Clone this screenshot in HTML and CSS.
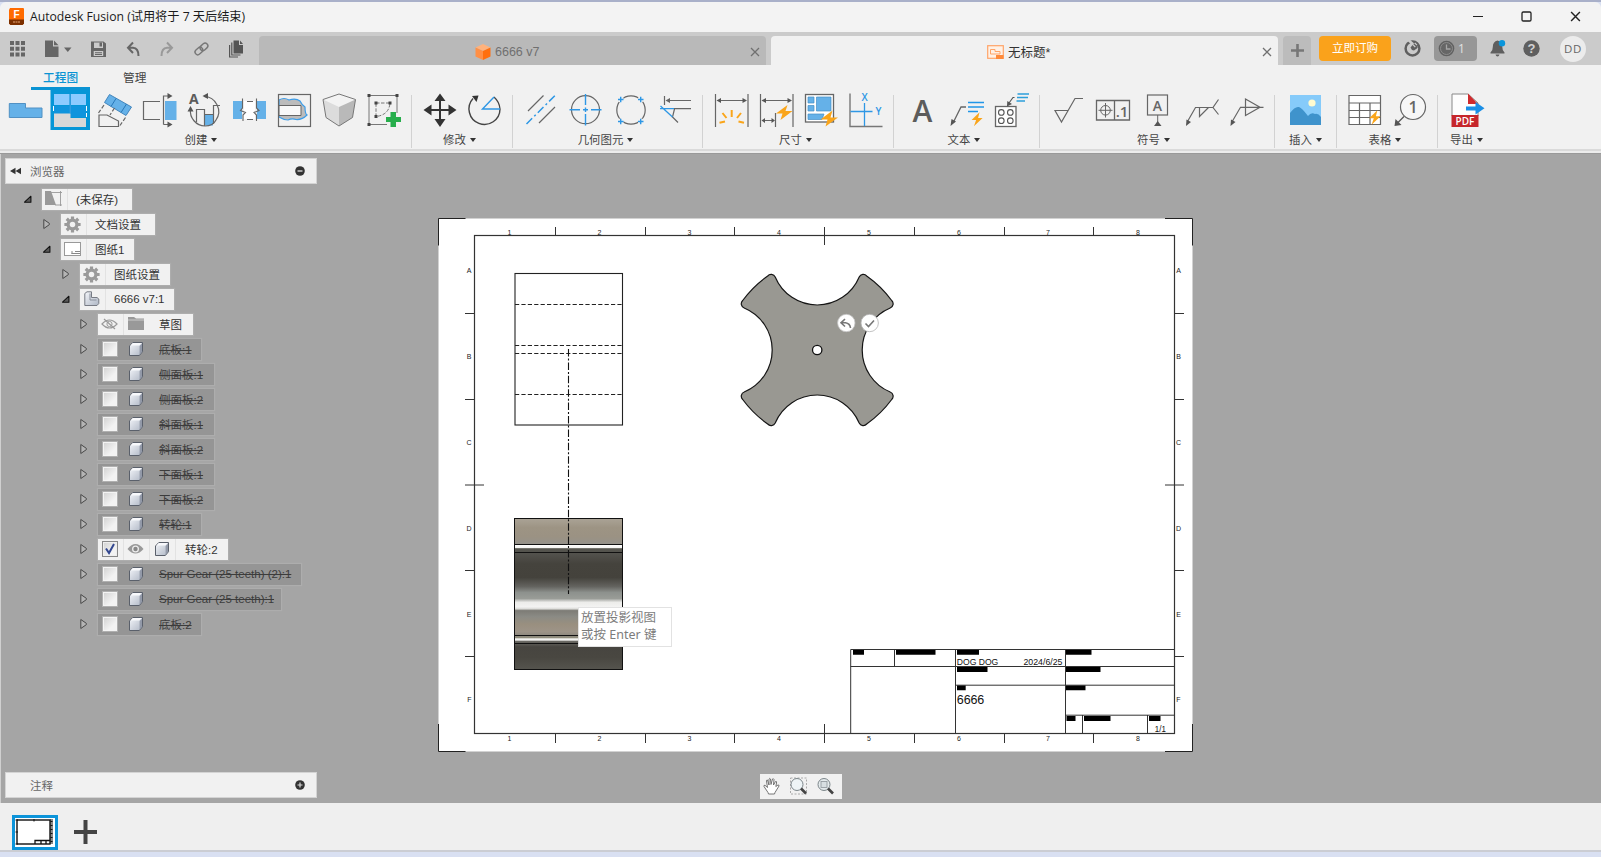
FILE: index.html
```html
<!DOCTYPE html>
<html lang="zh-CN">
<head>
<meta charset="utf-8">
<title>Autodesk Fusion</title>
<link rel="stylesheet" href="styles.css">
</head>
<body>
<svg class="defs" width="0" height="0">
  <defs>
    <linearGradient id="boxg" x1="0" y1="0" x2="1" y2="1"><stop offset="0" stop-color="#f4f6fa"/><stop offset="1" stop-color="#aeb6c4"/></linearGradient>
    <linearGradient id="shaft" x1="0" y1="0" x2="0" y2="1">
      <stop offset="0" stop-color="#aaa396"/><stop offset=".06" stop-color="#9d9484"/><stop offset=".12" stop-color="#9b9283"/><stop offset=".168" stop-color="#95928b"/>
      <stop offset=".175" stop-color="#fff"/><stop offset=".193" stop-color="#f4f4f2"/><stop offset=".2" stop-color="#55554e"/><stop offset=".235" stop-color="#52514c"/>
      <stop offset=".3" stop-color="#45433d"/><stop offset=".39" stop-color="#44423c"/><stop offset=".45" stop-color="#63635f"/><stop offset=".49" stop-color="#8d918d"/>
      <stop offset=".53" stop-color="#999c97"/><stop offset=".555" stop-color="#ececea"/><stop offset=".585" stop-color="#f3f3f2"/><stop offset=".598" stop-color="#dcdcd9"/>
      <stop offset=".61" stop-color="#7d7c76"/><stop offset=".65" stop-color="#8b8b85"/><stop offset=".7" stop-color="#998f7f"/><stop offset=".75" stop-color="#9d9488"/><stop offset=".775" stop-color="#8d897f"/>
      <stop offset=".79" stop-color="#8f8d7c"/><stop offset=".797" stop-color="#f8f8f6"/><stop offset=".806" stop-color="#f0f0ee"/><stop offset=".812" stop-color="#6c6b65"/><stop offset=".85" stop-color="#474540"/><stop offset=".92" stop-color="#494741"/><stop offset="1" stop-color="#55544e"/>
    </linearGradient>
    <symbol id="body" viewBox="0 0 16 16"><path d="M1.500 5 4.800 1.500H14.500V10.700L11.300 14.500H1.500Z" fill="url(#boxg)" stroke="#5a606b" stroke-width="1" stroke-linejoin="round"/><path d="M2.300 4.600 5 2.100H13.900L11.300 4.600Z" fill="#f8f9fc"/><path d="M11.600 4.900V13.500L14 10.700V2.600Z" fill="#9299a8"/></symbol>
    <symbol id="gear" viewBox="0 0 18 18"><g fill="#9a9a9a"><circle cx="9" cy="9" r="6.400"/><path d="M7.300.4H10.700V3.200H7.300ZM7.300 14.800H10.700V17.600H7.300ZM.4 7.300H3.200V10.700H.4ZM14.800 7.300H17.600V10.700H14.800Z"/><path transform="rotate(45 9 9)" d="M7.300.4H10.700V3.200H7.300ZM7.300 14.800H10.700V17.600H7.300ZM.4 7.300H3.200V10.700H.4ZM14.800 7.300H17.600V10.700H14.800Z"/></g><circle cx="9" cy="9" r="2.900" fill="#f1f1f1"/></symbol>
    <symbol id="shut" viewBox="0 0 9 12"><path d="M1.800 1.500V10.500L7.300 6.700V5.300Z" fill="#b4b4b4" stroke="#484848" stroke-width="1" stroke-linejoin="round"/></symbol>
    <symbol id="open" viewBox="0 0 9 12"><path d="M1.500 9.200H7.900V3.200Z" fill="#5a5a5a" stroke="#111" stroke-width="1.100" stroke-linejoin="round"/></symbol>
    <symbol id="x" viewBox="0 0 10 10"><path d="M1 1 9 9M9 1 1 9" stroke="currentColor" stroke-width="1.300" fill="none"/></symbol>
    <symbol id="bolt" viewBox="0 0 14 16"><path d="M9.800.3 1 8.700H6L3.600 15.700 13.200 6.600H8.200Z" fill="#faa51a"/></symbol>
  </defs>
</svg>

<div class="desk"></div>
<header class="titlebar">
  <svg class="logo" width="15" height="17" viewBox="0 0 15 17"><path d="M1 0H14Q15 0 15 1V15.500L13.500 17H1.500L0 15.500V2Z" fill="#ff6b00"/><path d="M0 11.500H15V15.500L13.500 17H1.500L0 15.500Z" fill="#7c3000"/><text x="7.500" y="10" class="logo-f">F</text><path d="M4 14H11" stroke="#e8a878" stroke-dasharray="2 .5"/></svg>
  <span class="title">Autodesk Fusion (试用将于 7 天后结束)</span>
  <div class="winbtns">
    <svg width="10" height="12"><path d="M0 6.500H10" stroke="#222"/></svg>
    <svg width="11" height="11"><rect x="1" y="1" width="9" height="9" rx="1.300" fill="none" stroke="#222" stroke-width="1.300"/></svg>
    <svg width="11" height="11"><use href="#x" color="#222"/></svg>
  </div>
</header>

<nav class="tabrow">
  <div class="quick">
    <svg width="259" height="33" viewBox="0 32 259 33">
      <g fill="#666"><path d="M10 41h4v4h-4zM15.500 41h4v4h-4zM21 41h4v4h-4zM10 46.700h4v4h-4zM15.500 46.700h4v4h-4zM21 46.700h4v4h-4zM10 52.400h4v4h-4zM15.500 52.400h4v4h-4zM21 52.400h4v4h-4z"/>
      <path d="M45 40.500H53V46.500H58.500V57H45ZM54 40.500 58.500 45.300H54Z"/><path d="M64 47.500H71.500L67.800 52Z"/>
      <path fill-rule="evenodd" d="M91 41.500H103.500L106 43.500V57H91ZM94 42.500V48H103V42.500ZM93.700 51V56H103.200V51Z"/><path d="M99.500 42.500H102V46.500H99.500ZM95 52.200H102V53.200H95ZM95 54H102V55H95Z"/></g>
      <g fill="none" stroke="#666" stroke-width="2"><path d="M133 42.500 128 47.700 133 53M128.500 47.700H133Q138.500 48 138.500 56"/><path d="M167 42.500 172 47.700 167 53M171.500 47.700H167Q161.500 48 161.500 56" stroke="#999"/></g>
      <g fill="none" stroke="#777" stroke-width="1.400" transform="rotate(-42 201.500 49)"><rect x="194" y="46" width="8.500" height="5.500" rx="2.700"/><rect x="200.500" y="46.300" width="8.500" height="5.500" rx="2.700"/></g>
      <path d="M233.500 40.500H239V45H243V53.500H233.500ZM240 40.500 243 44H240Z" fill="#555"/><path d="M231.800 42.500V55H240.500M229.600 45V57H238" fill="none" stroke="#555" stroke-width="1.200"/>
    </svg>
  </div>
  <div class="tab">
    <svg class="cube" width="16" height="16" viewBox="0 0 16 16"><path d="M8 0 15.500 3.500 8 7 .5 3.500Z" fill="#ffb27c"/><path d="M.5 3.500 8 7V16L.5 12.500Z" fill="#ff8f45"/><path d="M15.500 3.500 8 7V16L15.500 12.500Z" fill="#ff6f0e"/></svg>
    <span>6666 v7</span><svg class="close" width="10" height="10"><use href="#x"/></svg>
  </div>
  <div class="tab active">
    <svg class="cube" width="17" height="14" viewBox="0 0 17 14"><rect x=".7" y=".7" width="15.600" height="12.600" fill="#fff1e6" stroke="#ffa468" stroke-width="1.200"/><path d="M3.500 4.500H8V6.500H13V9H3.500Z" fill="none" stroke="#ffa468"/><path d="M9 10H16.500V14H9Z" fill="#ff8a3a"/></svg>
    <span>无标题*</span><svg class="close" width="10" height="10"><use href="#x"/></svg>
  </div>
  <div class="newtab"><svg width="13" height="13"><path d="M6.500 0V13M0 6.500H13" stroke="#777" stroke-width="2.600"/></svg></div>
  <div class="buy">立即订购</div>
  <svg class="ext" width="17" height="17" viewBox="0 0 17 17"><circle cx="8.500" cy="8.500" r="6.900" fill="none" stroke="#5f5f5f" stroke-width="2.500"/><path d="M4.800.4 9.500 4.800" stroke="#ccc" stroke-width="2.600"/><path d="M6.500 7.500 9.800 3.500 14 2.500 13.500 8 10 10.500 8 10Z" fill="#5f5f5f"/><path d="M8.300 4 11.300 7M10.800 3 13 5.200" stroke="#ccc" stroke-width="1.100"/></svg>
  <div class="jobs"><svg width="17" height="17"><circle cx="8.500" cy="8.500" r="7.800" fill="#606060"/><circle cx="8.500" cy="8.500" r="6" fill="#666" stroke="#8c8c8c" stroke-width="1"/><path d="M8.500 4.500V9H12.500" fill="none" stroke="#a5a5a5" stroke-width="1.300"/></svg><span>1</span></div>
  <svg class="bell" width="17" height="18" viewBox="0 0 17 18"><path d="M7.500 1.500Q2.800 2.500 2.800 8 2.800 12 .5 13.500V14.500H14.500V13.500Q12.300 12 12.300 8 12 2.500 7.500 1.500ZM5.500 15.500H9.500Q9 17.500 7.500 17.500 6 17.500 5.500 15.500Z" fill="#5f5f5f"/><circle cx="12" cy="4.200" r="3.200" fill="#0a96dc"/></svg>
  <svg class="help" width="17" height="17"><circle cx="8.500" cy="8.500" r="8.200" fill="#5f5f5f"/><text x="8.500" y="13.200" class="q">?</text></svg>
  <div class="avatar">DD</div>
</nav>

<section class="ribbon">
  <div class="rtabs"><span class="on">工程图</span><span class="mgr">管理</span></div>
  <div class="groups">
    <div class="group g1"><div class="icons">
      <svg viewBox="3 90 45 40"><path d="M9.300 103.500H25.500V108H42V117.500H9.300Z" fill="#65b1e8" stroke="#5191c4"/></svg>
      <svg viewBox="48 90 45 40"><rect x="50.500" y="90" width="39.500" height="40" fill="#0696d7"/><path d="M54 94H69.500V105H54ZM71 94H86V105H71Z" fill="#8ccbff"/><path d="M54 106H86V117H54Z" fill="#0f94dd"/><path d="M54 113.500H70.500V118H86V127H54Z" fill="#d8d8d8"/><path d="M53.500 106V113M86.500 106V117" stroke="#fff" stroke-dasharray="5 2"/><path d="M70.200 94V113" stroke="#3f9fe0"/></svg>
      <svg viewBox="93 90 45 40"><path d="M109.500 94.500 131.500 107 126 115.500 104.500 102.500Z" fill="#65b1e8" stroke="#4386bd"/><path d="M116 98.500 111 106.500M126.500 104 121 112.500" stroke="#2878b8"/><path d="M99 115H107L118.500 121V126.500H99Z" fill="none" stroke="#666" stroke-width="1.200"/><path d="M104 105 98.500 113M125.500 117.500 120 125.500M114.500 108 110 115" stroke="#666" stroke-width="1.200" stroke-dasharray="4 2"/></svg>
      <svg viewBox="138 90 45 40"><rect x="165" y="101" width="11.500" height="19" fill="#65b1e8"/><g fill="none" stroke="#666" stroke-width="1.200"><path d="M160 101.500H143.500V119.500H160M163.500 124.500V96H169M163.500 124.500H169"/></g><path d="M167.500 93 172.500 96 167.500 99ZM167.500 121.500 172.500 124.500 167.500 127.500Z" fill="#555"/></svg>
      <svg viewBox="183 90 45 40"><path d="M205 114.500H213V125.500H205Z" fill="#65b1e8"/><g fill="none" stroke="#666" stroke-width="1.200"><path d="M204 96.500A15 15 0 0 1 216 120Q213 126 205 126A15 15 0 0 1 190.500 109"/><path d="M196.500 122V109.500H204.500V126M204.500 114.500H213.500V124M213.500 114V105.500H220"/></g><path d="M202.500 96 208 93V99ZM190.500 106 187.500 111.500H193.500Z" fill="#555"/><text x="189" y="103.500" class="ico-a small">A</text></svg>
      <svg viewBox="228 90 45 40"><path d="M233 101H242V119H233ZM257 101H266V119H257Z" fill="#65b1e8"/><path d="M244 101H255V119H244Z" fill="#fff"/><g fill="none" stroke="#666" stroke-width="1.100"><path d="M242.500 98.500V108L240.500 110.500 245.500 112.500 243 115V121M256.500 98.500V108L259 110.500 254 112.500 256.500 115V121M247 101.500H253M247 119.500H253"/></g></svg>
      <svg viewBox="273 90 45 40"><path d="M279 100Q284 97 289 100 296 98 300 101 302 105 305 107 305 114 307 115 302 120 296 119.500 292 118 288 120 284 120 279 117Z" fill="#bcbcbc" stroke="#3d9de8" stroke-width="1.200"/><path d="M279 105.500H301V115.500H279Z" fill="#f8f8f8" stroke="#666"/><rect x="278.500" y="94.500" width="32" height="32" fill="none" stroke="#666" stroke-width="1.200"/></svg>
      <svg viewBox="318 90 45 40"><path d="M339 94 355.500 99.500 339 107 323 99.500Z" fill="#f3f3f3"/><path d="M323 99.500 339 107V126L326 117.500Z" fill="#dcdcdc"/><path d="M355.500 99.500 339 107V126L352.500 117.500Z" fill="#b9b9b9"/><path d="M339 94 355.500 99.500 352.500 117.500 339 126 326 117.500 323 99.500Z" fill="none" stroke="#777"/></svg>
      <svg viewBox="363 90 45 40"><path d="M369 95.500H397V113M369 95.500V124.500H387" fill="none" stroke="#777"/><path d="M376 103H390Q389 115 376 116.500Z" fill="none" stroke="#777" stroke-dasharray="3.500 1.500"/><path d="M367.500 94h3v3h-3zM395.500 94h3v3h-3zM367.500 123h3v3h-3zM374.500 101.500h3v3h-3zM388.500 101.500h3v3h-3zM374.500 115h3v3h-3z" fill="#444"/><path d="M390.500 112H396V117H401V122H396V127H390.500V122H386V117H390.500Z" fill="#27ae4c"/></svg>
    </div><div class="glabel">创建<i></i></div></div>
    <div class="group g2"><div class="icons">
      <svg viewBox="418 90 45 40"><path d="M440 98V122M428 110H452" stroke="#333" stroke-width="2"/><path d="M440 93.500 445.500 101H434.500ZM440 127 445.500 119H434.500ZM423.500 110 431.500 104.500V115.500ZM456.500 110 448.500 104.500V115.500Z" fill="#333"/></svg>
      <svg viewBox="463 90 45 40"><path d="M473 98.500A15.500 15.500 0 1 0 500 109" fill="none" stroke="#444" stroke-width="1.400"/><path d="M494 97Q499.500 102 500 109" fill="none" stroke="#444" stroke-width="1.300"/><path d="M494 97 482.500 109H500" fill="none" stroke="#2e97e5" stroke-width="1.400"/><path d="M472 96 478.500 95.500 476.500 102Z" fill="#333"/></svg>
    </div><div class="glabel">修改<i></i></div></div>
    <div class="group g3"><div class="icons">
      <svg viewBox="519 90 45 40"><path d="M528 111 543.500 95.500M539 123 555 107" stroke="#666" stroke-width="1.200"/><path d="M526.500 124 555 95.500" stroke="#2e97e5" stroke-width="1.500" stroke-dasharray="8 3 2 3"/></svg>
      <svg viewBox="564 90 45 40"><circle cx="585.500" cy="109.700" r="14" fill="none" stroke="#666" stroke-width="1.200"/><path d="M585.500 94V105M585.500 107.500V112M585.500 114V125.500M569.500 109.700H580M583 109.700H588M591 109.700H601.500" stroke="#2e97e5" stroke-width="1.400"/></svg>
      <svg viewBox="609 90 45 40"><circle cx="631" cy="110" r="14.200" fill="none" stroke="#666" stroke-width="1.200"/><path d="M618 99.500H623.500M620.700 96.700V102.300M638 99.500H643.500M640.700 96.700V102.300M618 121.500H623.500M620.700 118.700V124.300M638 121.500H643.500M640.700 118.700V124.300" stroke="#f1f1f1" stroke-width="4"/><path d="M618 99.500H623.500M620.700 96.700V102.300M638 99.500H643.500M640.700 96.700V102.300M618 121.500H623.500M620.700 118.700V124.300M638 121.500H643.500M640.700 118.700V124.300" stroke="#2e97e5" stroke-width="1.400"/></svg>
      <svg viewBox="654 90 45 40"><path d="M664.500 96V105M667 100.500H691M674 108.700H691M674.500 109 672.500 117 678 122.500" fill="none" stroke="#666" stroke-width="1.200"/><path d="M665.500 100.500 670 98V103Z" fill="#666"/><path d="M660 108.700H674M660.500 106 672.500 117" stroke="#2e97e5" stroke-width="1.300" fill="none"/></svg>
    </div><div class="glabel">几何图元<i></i></div></div>
    <div class="group g4"><div class="icons">
      <svg viewBox="709 90 45 40"><path d="M715.500 94V127M748 94V127M719 100.500H745" stroke="#666" stroke-width="1.200"/><path d="M716.500 100.500 721 98V103ZM747 100.500 742.500 98V103Z" fill="#555"/><path d="M731.700 110V117M722.500 113 726.500 118M741 113 737 118M719.500 122.700 725 121.500M744 122.700 738.500 121.500" stroke="#faa51a" stroke-width="2"/></svg>
      <svg viewBox="754 90 45 40"><path d="M760.500 94V127M793 94V127M764 100.500H790M775.500 113V127M763 120.500H773" stroke="#666" stroke-width="1.200"/><path d="M761.500 100.500 766 98V103ZM792 100.500 787.500 98V103ZM761.500 120.500 765 118V123ZM775 120.500 771.500 118V123Z" fill="#555"/><path d="M787.500 105 776 113.500H782.500L780.500 120 792.500 111H785.500Z" fill="#faa51a"/></svg>
      <svg viewBox="799 90 45 40"><rect x="805.500" y="94.500" width="28" height="27.500" fill="#fff" stroke="#666" stroke-width="1.300"/><path d="M808 97H814V103H808ZM808 105.500H814V111H808ZM816.500 97H831V111H816.500ZM808 114H824L822 119.500H808Z" fill="#65b1e8" stroke="#468fc6" stroke-width=".7"/><path d="M832.500 110.500 820.500 119.500H827.500L825.500 126.500 838 117.500H830.500Z" fill="#faa51a"/></svg>
      <svg viewBox="844 90 45 40"><path d="M850 93.500V126.500H882.500" fill="none" stroke="#777" stroke-width="1.400"/><path d="M864.500 103V126M850.500 111.500H872.500" stroke="#2e97e5" stroke-width="1.300"/><text x="864.500" y="101" class="xy">X</text><text x="878.500" y="115" class="xy">Y</text></svg>
    </div><div class="glabel">尺寸<i></i></div></div>
    <div class="group g5"><div class="icons">
      <svg viewBox="900 90 45 40"><text x="922.500" y="122" class="ico-a mid">A</text></svg>
      <svg viewBox="945 90 45 40"><path d="M966 107H961L953.500 122" fill="none" stroke="#666" stroke-width="1.300"/><path d="M950.500 126 951.500 119 956 121.500Z" fill="#555"/><path d="M968 102.500H984M968 107H984M968 111.500H978" stroke="#2196e8" stroke-width="1.700"/><use href="#bolt" x="970" y="112" width="14" height="14.500"/></svg>
      <svg viewBox="990 90 45 40"><rect x="995.500" y="106.500" width="20.500" height="20" fill="#fff" stroke="#666" stroke-width="1.300"/><g fill="none" stroke="#555" stroke-width="1.100"><circle cx="1001.300" cy="112.400" r="2.800"/><circle cx="1010.300" cy="112.400" r="2.800"/><circle cx="1001.300" cy="120.700" r="2.800"/><circle cx="1010.300" cy="120.700" r="2.800"/><path d="M1014.500 97.500H1013L1009 103"/></g><path d="M1007 106.500 1007.300 101 1012 104Z" fill="#555"/><path d="M1017.500 94H1029M1017 97.500H1028M1016.500 101H1025" stroke="#2d9fda" stroke-width="1.400"/></svg>
    </div><div class="glabel">文本<i></i></div></div>
    <div class="group g6"><div class="icons">
      <svg viewBox="1045 90 45 40"><path d="M1083 98.500H1075L1061.500 122 1055 110.500H1068" fill="none" stroke="#666" stroke-width="1.200"/></svg>
      <svg viewBox="1090 90 45 40"><path d="M1096.500 100.500H1129.500V120H1096.500ZM1114.500 100.500V120" fill="none" stroke="#666" stroke-width="1.300"/><path d="M1105.500 103V117.500M1098.500 110.300H1112.500" stroke="#666"/><circle cx="1105.500" cy="110.300" r="4.800" fill="none" stroke="#666"/><text x="1122" y="116.500" class="sym tol">.1</text></svg>
      <svg viewBox="1135 90 45 40"><rect x="1147.500" y="95" width="20" height="20" fill="none" stroke="#666" stroke-width="1.200"/><text x="1157.500" y="111" class="sym">A</text><path d="M1157.700 115V123" stroke="#666"/><path d="M1157.700 121 1161.500 126H1154Z" fill="#555"/></svg>
      <svg viewBox="1180 90 45 40"><path d="M1187.500 121.500 1195.500 107.500H1213M1199.500 107.500V116.500L1208.500 107.500M1218.500 99.500 1213 107.500 1218.500 114.500" fill="none" stroke="#666" stroke-width="1.200"/><path d="M1186 126 1186.500 119.500 1191 122Z" fill="#555"/></svg>
      <svg viewBox="1225 90 45 40"><path d="M1232.500 121 1240.500 107.300H1263.500M1245.500 99V115.500L1260 107.300Z" fill="none" stroke="#666" stroke-width="1.200"/><path d="M1230.500 126 1231 119.500 1235.500 122Z" fill="#555"/></svg>
    </div><div class="glabel">符号<i></i></div></div>
    <div class="group g7"><div class="icons">
      <svg viewBox="1283 90 45 40"><rect x="1290" y="95" width="31" height="30" fill="#86cbfa"/><path d="M1290 113Q1295 106 1299 107 1302 108 1308 116 1311 112 1315 114 1318 113 1321 117V125H1290Z" fill="#3f93cc"/><circle cx="1312" cy="103" r="3.600" fill="#fffbd0"/></svg>
    </div><div class="glabel">插入<i></i></div></div>
    <div class="group g8"><div class="icons">
      <svg viewBox="1342 90 45 40"><path d="M1349 95.500H1380.500V124.500H1349ZM1349 103H1380.500M1349 110.500H1380.500M1349 117.500H1380.500M1359.500 103V124.500M1370 103V124.500" fill="#fff" stroke="#666" stroke-width="1.200"/><use href="#bolt" x="1368" y="110" width="13.500" height="15"/></svg>
      <svg viewBox="1387 90 45 40"><circle cx="1413" cy="107" r="12.500" fill="#f7f7f7" stroke="#666" stroke-width="1.200"/><text x="1413" y="112.500" class="sym one">1</text><path d="M1404 116.500 1398 122.500" stroke="#555" stroke-width="1.300"/><path d="M1394.500 126 1395.500 119 1401.500 125Z" fill="#555"/></svg>
    </div><div class="glabel">表格<i></i></div></div>
    <div class="group g9"><div class="icons">
      <svg viewBox="1444 90 45 40"><path d="M1452 94H1468L1478 103V116H1452Z" fill="#fdfdfd" stroke="#888"/><path d="M1468 93.500V104H1478Z" fill="#cf2a2d"/><path d="M1451.500 115H1478.500V127H1451.500Z" fill="#c6262b"/><text x="1465" y="124.800" class="pdf">PDF</text><path d="M1466 106.500H1475.500V102L1484.500 108.300 1475.500 114.500V110.500H1466Z" fill="#1a8fe6"/></svg>
    </div><div class="glabel">导出<i></i></div></div>
  </div>
</section>

<main class="canvas">
  <svg class="sheet" width="756" height="536" viewBox="438 217 756 536">
    <rect x="438.500" y="218.500" width="754" height="533" fill="#fff"/>
    <path d="M465.500 218.500H438.500V245.500M1165 218.500H1192.500V245.500M438.500 724V751.500H465.500M1192.500 724V751.500H1165" fill="none" stroke="#222"/>
    <rect x="474.500" y="235.500" width="700" height="498" fill="none" stroke="#333" stroke-width="1.200"/>
    <path stroke="#333" fill="none" d="M555.500 227V235M645.500 227V235M734.500 227V235M824.500 227V245M914.500 227V235M1004.500 227V235M1093.500 227V235M555.500 734V743M645.500 734V743M734.500 734V743M824.500 724V743M914.500 734V743M1004.500 734V743M1093.500 734V743M465 313.500H474M465 399.500H474M465 485H484M465 570.500H474M465 656.500H474M1175 313.500H1184M1175 399.500H1184M1165 485H1184M1175 570.500H1184M1175 656.500H1184"/>
    <g class="zone">
      <text x="509.500" y="235">1</text><text x="599.500" y="235">2</text><text x="689.500" y="235">3</text><text x="779" y="235">4</text><text x="869" y="235">5</text><text x="959" y="235">6</text><text x="1048" y="235">7</text><text x="1138" y="235">8</text>
      <text x="509.500" y="740.700">1</text><text x="599.500" y="740.700">2</text><text x="689.500" y="740.700">3</text><text x="779" y="740.700">4</text><text x="869" y="740.700">5</text><text x="959" y="740.700">6</text><text x="1048" y="740.700">7</text><text x="1138" y="740.700">8</text>
      <text x="469" y="273">A</text><text x="469" y="359">B</text><text x="469" y="445">C</text><text x="469" y="530.700">D</text><text x="469" y="616.500">E</text><text x="469.500" y="702.300">F</text>
      <text x="1178.500" y="273">A</text><text x="1178.500" y="359">B</text><text x="1178.500" y="445">C</text><text x="1178.500" y="530.700">D</text><text x="1178.500" y="616.500">E</text><text x="1178.500" y="702.300">F</text>
    </g>
    <rect x="515" y="273.500" width="107.500" height="151.500" fill="none" stroke="#222" stroke-width="1.100"/>
    <path d="M515 304.500H622M515 345.500H622M515 353.500H622M515 394.500H622" stroke="#222" stroke-dasharray="4.200 2.200" stroke-width="1.100"/>
    <rect x="514.500" y="518.500" width="108" height="151" fill="url(#shaft)" stroke="#111"/>
    <path d="M514 544.500H622M514 552.500H622M514 635.500H622M514 643.500H622" stroke="#111"/>
    <path d="M568.500 349V594" stroke="#111" stroke-dasharray="7.500 2 2 1.900" stroke-width="1.100"/>
    <path transform="translate(817.200 350)" fill="#999892" stroke="#151515" stroke-width="1.200" d="M-42-73A45.500 45.500 0 0 0 42-73A4.500 4.500 0 0 1 49.500-74A110 110 0 0 1 74.500-49.500A4.500 4.500 0 0 1 73-42A45.500 45.500 0 0 0 73 42A4.500 4.500 0 0 1 74.500 49.500A110 110 0 0 1 49.500 74A4.500 4.500 0 0 1 42 73A45.500 45.500 0 0 0-42 73A4.500 4.500 0 0 1-49.500 74A110 110 0 0 1-74.500 49.500A4.500 4.500 0 0 1-73 42A45.500 45.500 0 0 0-73-42A4.500 4.500 0 0 1-74.500-49.500A110 110 0 0 1-49.500-74A4.500 4.500 0 0 1-42-73Z"/>
    <circle cx="817.200" cy="350" r="4.700" fill="#fff" stroke="#111" stroke-width="1.300"/>
    <g><circle cx="846.300" cy="323" r="8.700" fill="#fff" stroke="#c4c4c4" stroke-width=".8"/><circle cx="869.700" cy="323" r="8.700" fill="#fff" stroke="#b4b4b4" stroke-width=".8"/><path d="M845 319 841 322.800 845 326.500M841.500 322.800H845.500Q850 323.500 850.500 328M865.500 323.500 868.500 326.500 874 320.500" fill="none" stroke="#777" stroke-width="1.600"/></g>
    <path d="M850.700 733V649.500H1174M894.500 649.500V666.500M955.500 649.500V733M1065.500 649.500V733M1082.500 715V733M1147.500 715V733M850.700 666.500H1174M955.500 685.200H1174M1065.500 715.200H1174" fill="none" stroke="#333"/>
    <path d="M853 650h11v4.700h-11zM896 650h39.500v4.700h-39.500zM957 650h22v4.700h-22zM1066 650h25.500v4.700h-25.500zM957 667h30.500v5h-30.500zM1066 667h34.500v5h-34.500zM957 685.500h8.700v4.800h-8.700zM1066 685.500h19.500v4.800h-19.500zM1066.500 716h9v5h-9zM1084 716h26.500v5h-26.500zM1149 716h11.500v5h-11.500z"/>
    <g class="block"><text x="956.800" y="664.500" textLength="41.500" lengthAdjust="spacingAndGlyphs">DOG DOG</text><text x="1023.500" y="664.500" textLength="39" lengthAdjust="spacingAndGlyphs">2024/6/25</text><text x="956.800" y="703.700" textLength="27.500" class="big">6666</text><text x="1154.800" y="731.500" textLength="11" lengthAdjust="spacingAndGlyphs">1/1</text></g>
  </svg>
  <div class="tip">放置投影视图<br>或按 Enter 键</div>

  <aside class="browser">
    <div class="panel"><svg width="12" height="8"><path d="M0 4 5.500 .8V7.200ZM5.500 4 11 .8V7.200Z" fill="#333"/></svg><span>浏览器</span><svg class="dot" width="10" height="10"><circle cx="5" cy="5" r="4.800" fill="#333"/><path d="M2.500 5H7.500" stroke="#ddd" stroke-width="1.300"/></svg></div>
    <ul class="tree">
      <li class="d0"><svg class="arr"><use href="#open"/></svg><div class="node w90"><b><svg width="17" height="16"><path d="M0 0H6L11 14H0Z" fill="#999"/><path d="M5 1.500H17M15.500 0V15M10 14H17" stroke="#999" stroke-width=".9" fill="none"/></svg></b><span>(未保存)</span></div></li>
      <li class="d1"><svg class="arr"><use href="#shut"/></svg><div class="node w94"><b><svg width="17" height="17"><use href="#gear"/></svg></b><span>文档设置</span></div></li>
      <li class="d1"><svg class="arr"><use href="#open"/></svg><div class="node w73"><b><svg width="17" height="14"><rect x=".5" y=".5" width="16" height="13" fill="#fff" stroke="#999"/><path d="M7.500 11.500H16M8 9V12M11 9.500H16" stroke="#888"/></svg></b><span>图纸1</span></div></li>
      <li class="d2"><svg class="arr"><use href="#shut"/></svg><div class="node w90"><b><svg width="17" height="17"><use href="#gear"/></svg></b><span>图纸设置</span></div></li>
      <li class="d2"><svg class="arr"><use href="#open"/></svg><div class="node w94"><b><svg width="16" height="16"><path d="M.8 2.500 3 .8H7.500V6.500H13L14.800 8V12.500L13 14.500H.8Z" fill="url(#boxg)" stroke="#777b84"/><path d="M6 2.500V9H12.500" stroke="#8a909c" fill="none"/></svg></b><span>6666 v7:1</span></div></li>
      <li class="d3"><svg class="arr"><use href="#shut"/></svg><div class="node w95 folder"><b><svg width="17" height="12"><path d="M1 6Q8.500-2 16 6 8.500 14 1 6ZM3 1 14 11" fill="none" stroke="#999" stroke-width="1.200"/><circle cx="8.500" cy="6" r="2.600" fill="none" stroke="#999"/></svg></b><b><svg width="18" height="14"><path d="M1 0H7L9 1.500H17V13H1Z" fill="#999"/><path d="M1 3H17" stroke="#d8d8d8" stroke-width=".8"/></svg></b><span>草图</span></div></li>
      <li class="d3"><svg class="arr"><use href="#shut"/></svg><div class="node off w103"><b><i class="chk"></i></b><b><svg width="16" height="16"><use href="#body"/></svg></b><span>底板:1</span></div></li>
      <li class="d3"><svg class="arr"><use href="#shut"/></svg><div class="node off w116"><b><i class="chk"></i></b><b><svg width="16" height="16"><use href="#body"/></svg></b><span>侧面板:1</span></div></li>
      <li class="d3"><svg class="arr"><use href="#shut"/></svg><div class="node off w116"><b><i class="chk"></i></b><b><svg width="16" height="16"><use href="#body"/></svg></b><span>侧面板:2</span></div></li>
      <li class="d3"><svg class="arr"><use href="#shut"/></svg><div class="node off w116"><b><i class="chk"></i></b><b><svg width="16" height="16"><use href="#body"/></svg></b><span>斜面板:1</span></div></li>
      <li class="d3"><svg class="arr"><use href="#shut"/></svg><div class="node off w116"><b><i class="chk"></i></b><b><svg width="16" height="16"><use href="#body"/></svg></b><span>斜面板:2</span></div></li>
      <li class="d3"><svg class="arr"><use href="#shut"/></svg><div class="node off w116"><b><i class="chk"></i></b><b><svg width="16" height="16"><use href="#body"/></svg></b><span>下面板:1</span></div></li>
      <li class="d3"><svg class="arr"><use href="#shut"/></svg><div class="node off w116"><b><i class="chk"></i></b><b><svg width="16" height="16"><use href="#body"/></svg></b><span>下面板:2</span></div></li>
      <li class="d3"><svg class="arr"><use href="#shut"/></svg><div class="node off w103"><b><i class="chk"></i></b><b><svg width="16" height="16"><use href="#body"/></svg></b><span>转轮:1</span></div></li>
      <li class="d3"><svg class="arr"><use href="#shut"/></svg><div class="node w130"><b><i class="chk on"><svg width="12" height="12"><path d="M2 5.500 5 10 10 1" fill="none" stroke="#33478f" stroke-width="2"/></svg></i></b><b><svg width="17" height="12"><path d="M.5 6Q8.500-4 16.500 6 8.500 15 .5 6Z" fill="#999"/><circle cx="8.500" cy="6" r="3.500" fill="#ececec"/><circle cx="8.500" cy="6" r="2.200" fill="#888"/></svg></b><b><svg width="16" height="16"><use href="#body"/></svg></b><span>转轮:2</span></div></li>
      <li class="d3"><svg class="arr"><use href="#shut"/></svg><div class="node off w203"><b><i class="chk"></i></b><b><svg width="16" height="16"><use href="#body"/></svg></b><span>Spur Gear (25 teeth) (2):1</span></div></li>
      <li class="d3"><svg class="arr"><use href="#shut"/></svg><div class="node off w183"><b><i class="chk"></i></b><b><svg width="16" height="16"><use href="#body"/></svg></b><span>Spur Gear (25 teeth):1</span></div></li>
      <li class="d3"><svg class="arr"><use href="#shut"/></svg><div class="node off w103"><b><i class="chk"></i></b><b><svg width="16" height="16"><use href="#body"/></svg></b><span>底板:2</span></div></li>
    </ul>
    <div class="panel notes"><svg width="12" height="8"></svg><span>注释</span><svg class="dot" width="10" height="10"><circle cx="5" cy="5" r="4.800" fill="#333"/><path d="M2.500 5H7.500M5 2.500V7.500" stroke="#ddd" stroke-width="1.200"/></svg></div>
  </aside>

  <div class="navbar">
    <svg width="17" height="18" viewBox="0 0 17 18"><path d="M5 15.500Q3 12.500 1 9.500 .5 8 2 8.300L4.500 10.500 3.500 4Q3.500 2.800 4.500 3L6 8 6 2Q6.500.8 7.500 2L8 7.500 9.500 2Q10.500 1.200 11 2.500L10.500 8 12.500 4.500Q14 4 13.500 6L12.800 9.500 15 8Q16.500 8 16 9L12 15.500 11.500 17H5.500Z" fill="#fff" stroke="#666" stroke-width=".9"/></svg>
    <svg width="17" height="18" viewBox="0 0 17 18"><path d="M.5 1H16.500V17H.5Z" fill="none" stroke="#aaa" stroke-dasharray="2 1.500"/><circle cx="7" cy="7.500" r="6" fill="#eef4f6" stroke="#7c868a"/><path d="M11 11.500 16 16.500" stroke="#444" stroke-width="2.600"/></svg>
    <svg width="17" height="18" viewBox="0 0 17 18"><circle cx="7" cy="7.500" r="6" fill="#e4eaec" stroke="#7c868a"/><rect x="4" y="4.500" width="6" height="6" fill="#d8dfe2" stroke="#8d959a" stroke-width=".8"/><path d="M11 11.500 16 16.500" stroke="#444" stroke-width="2.600"/></svg>
  </div>
</main>

<footer class="sheets">
  <div class="thumb"><svg width="40" height="29" viewBox="0 0 40 29"><rect width="40" height="29" fill="#fff"/><path d="M36.500 1V26" stroke="#888" stroke-width="3"/><rect x="2" y="2" width="33" height="24" fill="none" stroke="#111" stroke-width="1.400"/><path d="M20 26V22.500H35M26 22.500V26M31 22.500V26" fill="none" stroke="#111" stroke-width="1.300"/><path d="M36.500 3V26" stroke="#111" stroke-width="2" stroke-dasharray="1 3"/><path d="M.5 2H3M.5 14H3M.5 26H3M19 1V3.500" stroke="#111"/></svg></div>
  <svg class="add" width="23" height="24"><path d="M11.500 0V24M0 12H23" stroke="#444" stroke-width="4"/></svg>
</footer>
</body>
</html>
```
FILE: styles.css
```css
* { box-sizing: border-box; }
body { margin: 0; width: 1601px; height: 857px; overflow: hidden; display: flex; flex-direction: column; background: #d9e0f2; font: 12px "Liberation Sans", "Noto Sans CJK SC", sans-serif; color: #444; }
svg { display: block; flex: none; }
.defs { position: absolute; }
.desk { height: 2px; flex: none; background: #a9b0c9; }
.titlebar { height: 30px; flex: none; display: flex; align-items: center; padding: 0 20px 2px 9px; background: #f3f3f3; border-radius: 6px 6px 0 0; }
.title { margin-left: 6px; font: 12.2px "Open Sans", "Noto Sans CJK SC", sans-serif; color: #1b1b1b; white-space: nowrap; }
.logo-f { font: bold 10px "Liberation Sans", sans-serif; fill: #fff; text-anchor: middle; }
.winbtns { margin-left: auto; display: flex; align-items: center; gap: 38px; }

.tabrow { height: 33px; flex: none; display: flex; align-items: flex-start; background: #cbcbcb; }
.quick { width: 259px; flex: none; }
.tab { width: 507px; height: 29px; margin-top: 4px; display: flex; align-items: center; flex: none; background: #b9b9b9; color: #707070; border-radius: 4px 4px 0 0; padding: 2px 6px 0 216px; font-size: 12.5px; }
.tab span { margin-left: 4px; }
.tab .close { margin-left: auto; color: #707070; }
.tab.active { background: #f1f1f1; color: #333; margin-left: 5px; }
.newtab { width: 28px; height: 29px; margin: 4px 0 0 5px; background: #bcbcbc; border-radius: 4px 4px 0 0; display: flex; align-items: center; justify-content: center; flex: none; }
.buy { width: 72px; height: 25px; margin: 4px 0 0 8px; border-radius: 4px; background: #faa21b; color: #fff; line-height: 25px; text-align: center; font-size: 11.5px; flex: none; }
.ext { margin: 8px 0 0 13px; }
.jobs { width: 43px; height: 25px; margin: 4px 0 0 13px; border-radius: 4px; background: #979797; display: flex; align-items: center; padding-left: 4px; gap: 3px; color: #e2e2e2; font: 12px "Open Sans", sans-serif; flex: none; }
.bell { margin: 7px 0 0 13px; }
.help { margin: 8px 0 0 16px; }
.q { font: bold 13px "Liberation Sans", sans-serif; fill: #d2d2d2; text-anchor: middle; }
.avatar { width: 26px; height: 26px; margin: 4px 0 0 20px; border-radius: 50%; background: #ececec; color: #666; font: 11.5px/26px "Open Sans", sans-serif; text-align: center; letter-spacing: .6px; }

.ribbon { height: 89px; flex: none; background: #f1f1f1; border-bottom: 1px solid #999; box-shadow: inset 0 -2px #ececec, inset 0 -4px #dadada; }
.rtabs { height: 25px; display: flex; font-size: 11.7px; line-height: 25px; }
.rtabs .on { width: 59px; padding-left: 12px; margin-left: 31px; color: #0a93d3; border-bottom: 3px solid #0a93d3; font-weight: 500; }
.rtabs .mgr { margin-left: 33px; }
.groups { display: flex; height: 60px; }
.group { height: 58px; display: flex; flex-direction: column; }
.group:not(.g9) { background: linear-gradient(#d2d2d2, #d2d2d2) right bottom / 1px 53px no-repeat; }
.icons { display: flex; height: 40px; }
.icons svg { width: 45px; height: 40px; }
.glabel { display: flex; align-items: center; justify-content: center; font-size: 11.4px; line-height: 18px; height: 20px; padding-top: 1px; white-space: nowrap; }
.glabel i { border: 3px solid transparent; border-top: 4.5px solid #333; border-bottom: 0; margin-left: 4px; }
.g1 { width: 412px; padding: 0 4px 0 3px; } .g1 .glabel { padding-right: 9px; }
.g2 { width: 101px; padding: 0 5px 0 6px; } .g2 .glabel { padding-right: 7px; }
.g3 { width: 190px; padding: 0 4px 0 6px; } .g3 .glabel { padding-right: 7px; }
.g4 { width: 191px; padding: 0 5px 0 6px; } .g4 .glabel { padding-right: 7px; }
.g5 { width: 146px; padding: 0 5px 0 6px; } .g5 .glabel { padding-right: 7px; }
.g6 { width: 235px; padding: 0 5px; } .g6 .glabel { padding-right: 8px; }
.g7 { width: 62px; padding: 0 9px 0 8px; }
.g8 { width: 101px; padding: 0 6px 0 5px; } .g8 .glabel { padding-right: 4px; }
.g9 { width: 57px; padding: 0 6px; }
.ico-a { font: 600 30px "Open Sans", sans-serif; fill: #5c5c5c; }
.ico-a.small { font: bold 14px "Open Sans", sans-serif; }
.ico-a.mid { text-anchor: middle; }
.xy { font: 600 10px "Open Sans", sans-serif; fill: #2e97e5; text-anchor: middle; }
.sym { font: 600 14px "Open Sans", sans-serif; fill: #666; text-anchor: middle; }
.sym.tol { font-size: 15px; }
.sym.one { font-size: 16px; }
.pdf { font: 600 10px "Open Sans", sans-serif; fill: #fff; text-anchor: middle; }

.canvas { height: 649px; flex: none; position: relative; background: #a5a5a5; border-left: 1px solid #d0d0d0; }
.sheet { position: absolute; left: 437px; top: 63px; }
.zone text { font: 7px "Liberation Sans", sans-serif; fill: #222; text-anchor: middle; }
.block text { font: 9px "Liberation Sans", sans-serif; fill: #111; }
.block .big { font-size: 12.5px; }
.tip { position: absolute; left: 577px; top: 453px; width: 94px; height: 40px; background: #fff; border: 1px solid #e2e2e2; padding: 1px 2px; font: 12.5px/17px "Noto Sans", "Noto Sans CJK SC", sans-serif; color: #7c7c7c; white-space: nowrap; }
.browser { width: 317px; height: 100%; display: flex; flex-direction: column; padding: 4px 0 5px 4px; }
.panel { width: 312px; height: 26px; flex: none; display: flex; align-items: center; background: #f1f1f1; border: 1px solid #d4d4d4; padding: 0 11px 1px 4px; color: #666; font-size: 11.5px; }
.panel span { margin-left: 8px; }
.panel .dot { margin-left: auto; }
.notes { margin-top: auto; }
.tree { list-style: none; margin: 5px 0 0; padding: 0; }
.tree li { height: 21px; margin-bottom: 4px; display: flex; align-items: center; }
.d0 { padding-left: 18px; } .d1 { padding-left: 37px; } .d2 { padding-left: 56px; } .d3 { padding-left: 74px; }
.arr { width: 9px; height: 12px; margin-top: -1px; }
.node { height: 21px; margin-left: 10px; display: flex; align-items: center; background: #f1f1f1; font-size: 11.5px; color: #333; white-space: nowrap; box-shadow: 0 0 1px 1px #adadad; }
.node b { width: 26px; height: 21px; flex: none; display: flex; align-items: center; justify-content: center; padding: 0 2px 1px 0; border-right: 1px solid #e2e2e2; }
.node span { margin: -1px 0 0 8px; }
.d3 .node span { margin-left: 9px; }
.node.off { background: #959595; color: #3c3c3c; }
.node.off span { text-decoration: line-through; }
.node.off b, .folder b:nth-child(2) { border-color: transparent; }
.chk { width: 16px; height: 16px; background: linear-gradient(135deg, #d4d4d4, #f3f3f3 70%); border: 2px solid #f4f4f4; outline: 1px solid #b0b0b0; outline-offset: -1px; }
.chk.on { border-color: #eee; outline-color: #888; }
.w73 { width: 73px; } .w90 { width: 90px; } .w94 { width: 94px; } .w95 { width: 95px; } .w103 { width: 103px; } .w116 { width: 116px; } .w130 { width: 130px; } .w183 { width: 183px; } .w203 { width: 203px; }
.navbar { position: absolute; left: 759px; top: 620px; width: 82px; height: 25px; background: #f1f1f1; display: flex; align-items: center; gap: 10px; padding: 0 0 1px 3px; }
.sheets { height: 49px; flex: none; display: flex; background: #efefef; border-bottom: 2px solid #cbcdd3; padding: 12px 0 0 12px; }
.thumb { width: 46px; height: 35px; border: 3px solid #0c94da; }
.add { margin: 5px 0 0 16px; }
```
